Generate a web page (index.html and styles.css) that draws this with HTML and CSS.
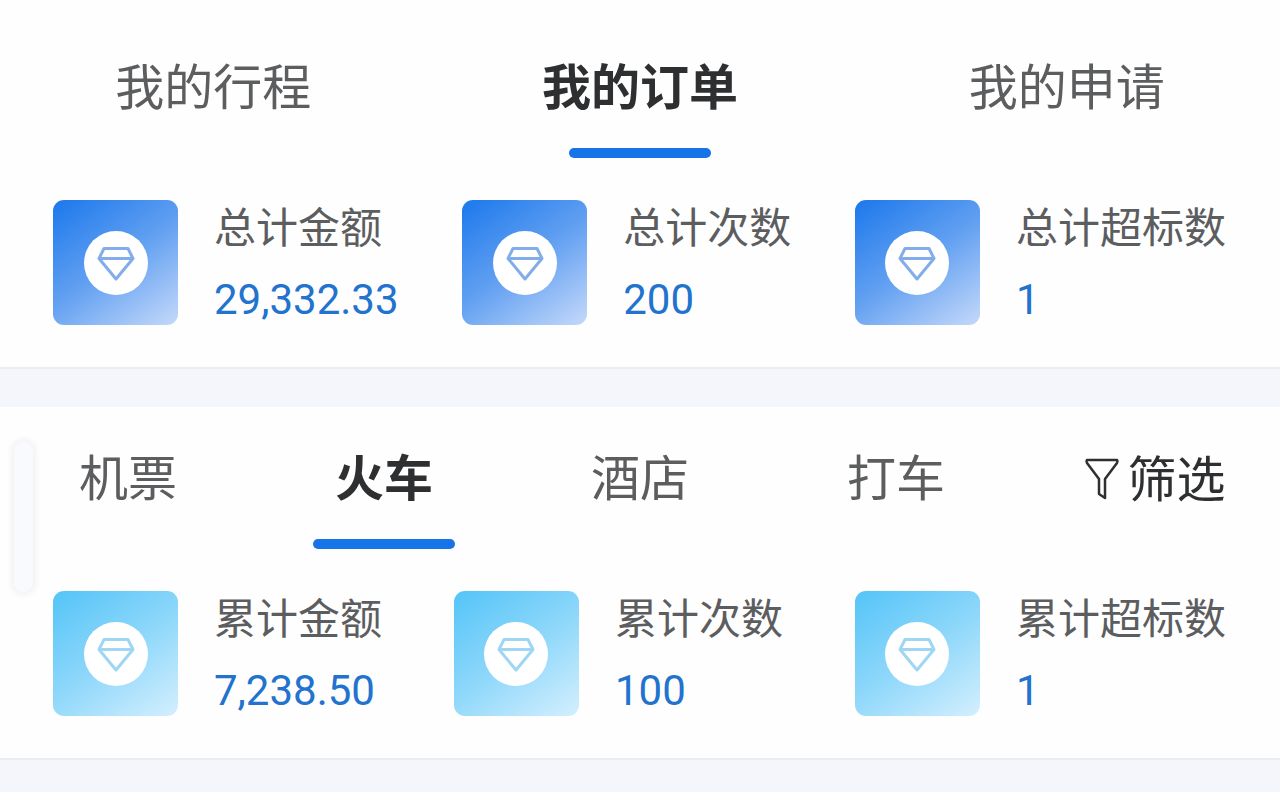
FILE: index.html
```html
<!DOCTYPE html>
<html lang="zh-CN">
<head>
    <meta charset="UTF-8">
    <meta name="viewport" content="width=device-width, initial-scale=1.0">
    <title>我的订单</title>
    <link rel="stylesheet" href="styles.css">
</head>
<body>
    <!-- Shared icon shapes -->
    <svg class="icon-defs" aria-hidden="true">
        <symbol id="diamond" viewBox="0 0 64 64">
            <circle cx="32" cy="32" r="32" fill="#fff"/>
            <path d="M20 17.500H44L49 27.500L32 48L15 27.500ZM15 27.500H49" fill="none" stroke="currentColor" stroke-width="3" stroke-linejoin="round"/>
        </symbol>
    </svg>

    <!-- Orders overview -->
    <section class="card card-first">
        <nav class="tabs">
            <button class="tab" type="button">我的行程</button>
            <button class="tab active" type="button">我的订单</button>
            <button class="tab" type="button">我的申请</button>
        </nav>
        <div class="stats">
            <div class="stat">
                <div class="stat-icon"><svg><use href="#diamond"/></svg></div>
                <div class="stat-text">
                    <span class="stat-label">总计金额</span>
                    <span class="stat-value">29,332.33</span>
                </div>
            </div>
            <div class="stat">
                <div class="stat-icon"><svg><use href="#diamond"/></svg></div>
                <div class="stat-text">
                    <span class="stat-label">总计次数</span>
                    <span class="stat-value">200</span>
                </div>
            </div>
            <div class="stat">
                <div class="stat-icon"><svg><use href="#diamond"/></svg></div>
                <div class="stat-text">
                    <span class="stat-label">总计超标数</span>
                    <span class="stat-value">1</span>
                </div>
            </div>
        </div>
    </section>

    <!-- Orders by type -->
    <section class="card card-light">
        <div class="handle"></div>
        <nav class="tabs">
            <button class="tab" type="button">机票</button>
            <button class="tab active" type="button">火车</button>
            <button class="tab" type="button">酒店</button>
            <button class="tab" type="button">打车</button>
            <button class="tab filter" type="button">
                <svg class="filter-icon" viewBox="0 0 36 44" aria-hidden="true">
                    <path d="M3 3H33Q34 4 33 6L21 22V41L15 37V22L3 6Q2 4 3 3Z" fill="none" stroke="currentColor" stroke-width="2.500" stroke-linejoin="round"/>
                </svg>
                <span>筛选</span>
            </button>
        </nav>
        <div class="stats">
            <div class="stat">
                <div class="stat-icon"><svg><use href="#diamond"/></svg></div>
                <div class="stat-text">
                    <span class="stat-label">累计金额</span>
                    <span class="stat-value">7,238.50</span>
                </div>
            </div>
            <div class="stat">
                <div class="stat-icon"><svg><use href="#diamond"/></svg></div>
                <div class="stat-text">
                    <span class="stat-label">累计次数</span>
                    <span class="stat-value">100</span>
                </div>
            </div>
            <div class="stat">
                <div class="stat-icon"><svg><use href="#diamond"/></svg></div>
                <div class="stat-text">
                    <span class="stat-label">累计超标数</span>
                    <span class="stat-value">1</span>
                </div>
            </div>
        </div>
    </section>
</body>
</html>
```
FILE: styles.css
```css
/* General Styles */
* {
    box-sizing: border-box;
}

body {
    margin: 0;
    font-family: Roboto, "Noto Sans CJK SC", sans-serif;
    background-color: #f4f6fb;
    color: #5c5d5f;
}

.icon-defs {
    display: none;
}

/* Cards */
.card {
    position: relative;
    margin-bottom: 38px;
    padding-bottom: 42px;
    border-bottom: 2px solid #ebedf1;
    background-color: #fefefe;
}

.card-first {
    padding-top: 16px;
}

.card-light {
    margin-bottom: 0;
}

/* Tabs */
.tabs {
    display: grid;
    grid-auto-flow: column;
    grid-auto-columns: minmax(0, 1fr);
}

.tab {
    display: flex;
    flex-direction: column;
    align-items: center;
    gap: 27px;
    padding: 41px 0 0;
    border: none;
    background: none;
    color: inherit;
    font-family: inherit;
    font-size: 49px;
    line-height: 64px;
    white-space: nowrap;
    cursor: pointer;
}

.tab::after {
    content: "";
    width: 142px;
    height: 10px;
    border-radius: 5px;
}

.tab.active {
    color: #2e2f31;
    font-weight: bold;
}

.tab.active::after {
    background-color: #1673e8;
}

.filter {
    flex-direction: row;
    align-items: flex-start;
    justify-content: center;
    gap: 7px;
    padding-left: 6px;
    color: #2e2f31;
    line-height: 66px;
}

.filter::after {
    display: none;
}

.filter-icon {
    width: 36px;
    height: 44px;
    margin-top: 9px;
}

/* Stats */
.stats {
    display: flex;
    justify-content: space-between;
    padding: 42px 54px 0 53px;
}

.stat {
    display: flex;
    gap: 36px;
}

.stat-icon {
    display: flex;
    align-items: center;
    justify-content: center;
    width: 125px;
    height: 125px;
    border-radius: 11px;
    background: linear-gradient(145deg, #1b78ec, #62a0f1 50%, #c5d9fa);
    color: #83adea;
}

.stat-icon svg {
    width: 64px;
    height: 64px;
}

.card-light .stat-icon {
    background: linear-gradient(145deg, #54c4f8, #8dd7fa 50%, #d4effe);
    color: #9fd6f4;
}

.stat-text {
    display: flex;
    flex-direction: column;
    justify-content: space-between;
    font-size: 42px;
    line-height: 50px;
}

.stat-label {
    line-height: 58px;
}

.stat-value {
    color: #2173ce;
}

/* Floating side handle, lies over the card */
.handle {
    position: absolute;
    top: 35px;
    left: 14px;
    width: 19px;
    height: 150px;
    border-radius: 10px;
    background-color: #f8fafd;
    box-shadow: 0 0 5px 4px rgba(0, 0, 0, 0.04);
}
```
